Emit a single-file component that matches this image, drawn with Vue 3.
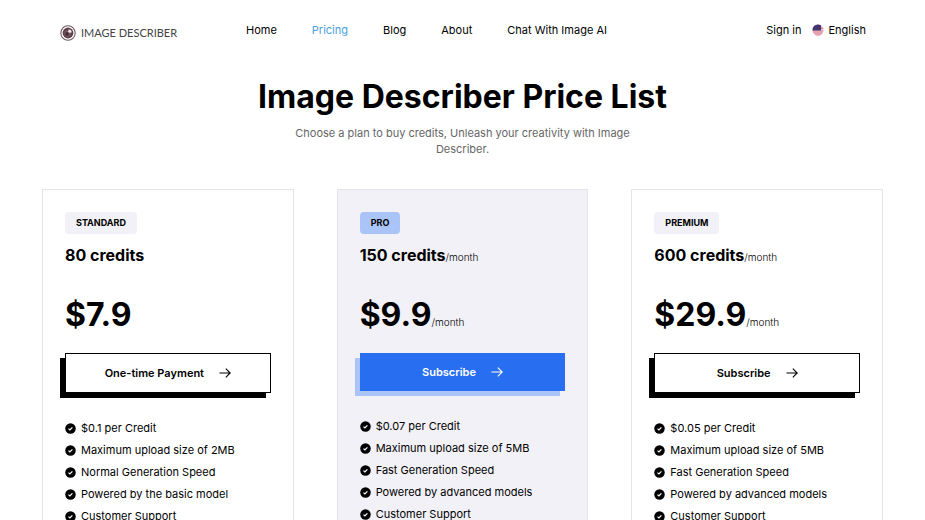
<script setup>
const links = [
  { label: 'Home' },
  { label: 'Pricing', active: true },
  { label: 'Blog' },
  { label: 'About' },
  { label: 'Chat With Image AI' },
]

const plans = [
  {
    name: 'STANDARD',
    credits: '80 credits',
    price: '$7.9',
    action: 'One-time Payment',
    features: ['$0.1 per Credit', 'Maximum upload size of 2MB', 'Normal Generation Speed', 'Powered by the basic model', 'Customer Support'],
  },
  {
    name: 'PRO',
    credits: '150 credits',
    price: '$9.9',
    period: '/month',
    action: 'Subscribe',
    featured: true,
    features: ['$0.07 per Credit', 'Maximum upload size of 5MB', 'Fast Generation Speed', 'Powered by advanced models', 'Customer Support'],
  },
  {
    name: 'PREMIUM',
    credits: '600 credits',
    price: '$29.9',
    period: '/month',
    action: 'Subscribe',
    features: ['$0.05 per Credit', 'Maximum upload size of 5MB', 'Fast Generation Speed', 'Powered by advanced models', 'Customer Support'],
  },
]
</script>

<template>
  <div class="page">
    <header class="header">
      <a class="logo" href="#">
        <svg class="logo-mark" viewBox="0 0 32 32" aria-hidden="true">
          <circle cx="16" cy="16" r="14.4" fill="#fff" stroke="#6d5961" stroke-width="2.2" />
          <circle cx="16" cy="16" r="10.8" fill="#5d3f4a" />
          <circle cx="15" cy="17" r="6.4" fill="#7b5b67" />
          <circle cx="14" cy="18" r="4" fill="#4b303a" />
          <path d="M16 8a8 8 0 0 1 8 8h-4a4 4 0 0 0-4-4z" fill="#8e737d" />
          <circle cx="19.5" cy="12.5" r="3" fill="#f3ecef" />
        </svg>
        <span class="logo-text">IMAGE DESCRIBER</span>
      </a>
      <nav class="nav">
        <a v-for="link in links" :key="link.label" href="#" :class="{ active: link.active }">{{ link.label }}</a>
      </nav>
      <div class="account">
        <a href="#">Sign in</a>
        <button type="button" class="language">
          <svg class="flag" viewBox="0 0 24 24" aria-hidden="true">
            <defs>
              <clipPath id="flag-round"><circle cx="12" cy="12" r="11" /></clipPath>
            </defs>
            <g clip-path="url(#flag-round)">
              <path fill="#f0cfd7" d="M0 0h24v24H0z" />
              <path fill="#d9768a" d="M0 1h24v3H0zM0 7h24v3H0zM0 13h24v2H0zM0 17h24v2H0zM0 21h24v3H0z" />
              <path fill="#43366f" d="M0 0h18v13H0z" />
            </g>
          </svg>
          English
        </button>
      </div>
    </header>

    <main>
      <section class="intro">
        <h1>Image Describer Price List</h1>
        <p>Choose a plan to buy credits, Unleash your creativity with Image Describer.</p>
      </section>

      <section class="plans">
        <article v-for="plan in plans" :key="plan.name" class="plan" :class="{ featured: plan.featured }">
          <span class="badge">{{ plan.name }}</span>
          <h2 class="credits">{{ plan.credits }}<small v-if="plan.period">{{ plan.period }}</small></h2>
          <p class="price">{{ plan.price }}<small v-if="plan.period">{{ plan.period }}</small></p>
          <button type="button" class="action">
            {{ plan.action }}
            <svg class="arrow" viewBox="0 0 12 12" aria-hidden="true">
              <path d="M.5 6h10.6M6.8 1.6 11.2 6l-4.4 4.4" fill="none" stroke="currentColor" stroke-width="1.1" />
            </svg>
          </button>
          <ul class="features">
            <li v-for="feature in plan.features" :key="feature">
              <svg class="check" viewBox="0 0 22 22" aria-hidden="true">
                <circle cx="11" cy="11" r="10.5" fill="#000" />
                <path d="m7 11.2 2.8 2.6 5-5.2" fill="none" stroke="#fff" stroke-width="2.4" />
              </svg>
              {{ feature }}
            </li>
          </ul>
        </article>
      </section>
    </main>
  </div>
</template>

<style>
body {
  margin: 0;
  background: #fff;
}
</style>

<style scoped>
.page {
  font-family: Inter, sans-serif;
  font-size: 11px;
  line-height: 16px;
  color: #000;
}

a {
  color: inherit;
  text-decoration: none;
}

button {
  font: inherit;
  color: inherit;
  cursor: pointer;
}

.header {
  display: flex;
  align-items: center;
  padding: 19px 59px 0 60px;
}

.logo {
  display: flex;
  align-items: center;
  gap: 5px;
  width: 186px;
  padding-top: 6px;
}

.logo-mark {
  width: 16px;
  height: 16px;
}

.logo-text {
  font-family: Lato, sans-serif;
  font-size: 11px;
  color: #444;
  white-space: nowrap;
}

.nav {
  display: flex;
  gap: 35px;
}

.nav .active {
  color: #4a9fe0;
}

.account {
  display: flex;
  align-items: center;
  gap: 10px;
  margin-left: auto;
}

.language {
  display: flex;
  align-items: center;
  gap: 5px;
  padding: 0;
  border: 0;
  background: none;
}

.flag {
  width: 12px;
  height: 12px;
}

.intro {
  display: flex;
  flex-direction: column;
  align-items: center;
  padding-top: 35px;
  text-align: center;
}

.intro h1 {
  margin: 0;
  font-size: 32px;
  line-height: 42px;
  font-weight: 700;
}

.intro p {
  max-width: 348px;
  margin: 7px 0 0;
  color: #666;
}

.plans {
  display: grid;
  grid-template-columns: repeat(3, 1fr);
  gap: 43px;
  padding: 32px 42px 40px;
}

.plan {
  padding: 22px;
  border: 1px solid #e5e5e7;
}

.badge {
  display: inline-block;
  padding: 3px 11px;
  border-radius: 4px;
  background: #f2f1f7;
  font-size: 9px;
  font-weight: 700;
}

.credits {
  margin: 9px 0 0;
  font-size: 16px;
  line-height: 24px;
  font-weight: 700;
}

.price {
  margin: 27px 0 0;
  font-size: 32px;
  line-height: 42px;
  font-weight: 700;
}

small {
  font-size: 10px;
  line-height: 1;
  font-weight: 300;
}

.action {
  display: flex;
  align-items: center;
  justify-content: center;
  gap: 15px;
  width: 100%;
  margin-top: 17px;
  padding: 11px;
  border: 1px solid #000;
  background: #fff;
  box-shadow: -5px 5px 0 #000;
  font-weight: 600;
}

.arrow {
  width: 12px;
  height: 12px;
}

.features {
  display: grid;
  gap: 6px;
  margin: 27px 0 0;
  padding: 0;
  list-style: none;
}

.features li {
  display: flex;
  align-items: center;
  gap: 5px;
}

.check {
  flex: none;
  width: 11px;
  height: 11px;
}

.featured {
  background: #f2f1f7;
}

.featured .badge {
  background: #abc4f7;
}

.featured .action {
  border: 0;
  background: #276ef1;
  box-shadow: -5px 5px 0 #abc4f7;
  color: #fff;
}
</style>
